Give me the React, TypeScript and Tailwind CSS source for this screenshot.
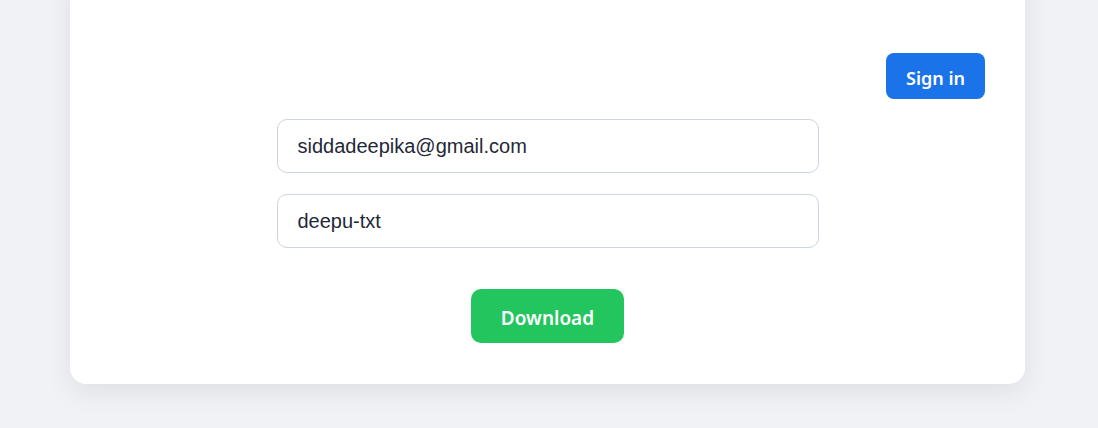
const App = () => {
  return (
    <div className="min-h-screen overflow-hidden bg-[#f0f2f5] font-['Liberation_Sans',Arial,sans-serif]">
      <div className="mx-[70px] -mt-8 w-[955px] rounded-2xl bg-white px-10 pb-[41px] pt-[85px] shadow-[0_8px_28px_rgba(0,0,0,0.08)]">
        <div className="flex justify-end">
          <button className="h-[46px] w-[99px] rounded-lg bg-[#1a73e8] pt-1 font-['Noto_Sans',sans-serif] text-[18px] font-semibold text-white">
            Sign in
          </button>
        </div>
        <div className="mx-auto mt-5 flex w-[542px] flex-col gap-[21px]">
          <input
            className="h-[54px] w-full rounded-[10px] border border-[#cbd5e1] px-5 text-[20px] text-[#1f2937] outline-none"
            defaultValue="siddadeepika@gmail.com"
          />
          <input
            className="h-[54px] w-full rounded-[10px] border border-[#cbd5e1] px-5 text-[20px] text-[#1f2937] outline-none"
            defaultValue="deepu-txt"
          />
        </div>
        <div className="mt-[41px] flex justify-center">
          <button className="h-[54px] w-[153px] rounded-[10px] bg-[#22c55e] pt-1 font-['Noto_Sans',sans-serif] text-[19px] font-semibold text-white">
            Download
          </button>
        </div>
      </div>
    </div>
  );
};

export default App;
